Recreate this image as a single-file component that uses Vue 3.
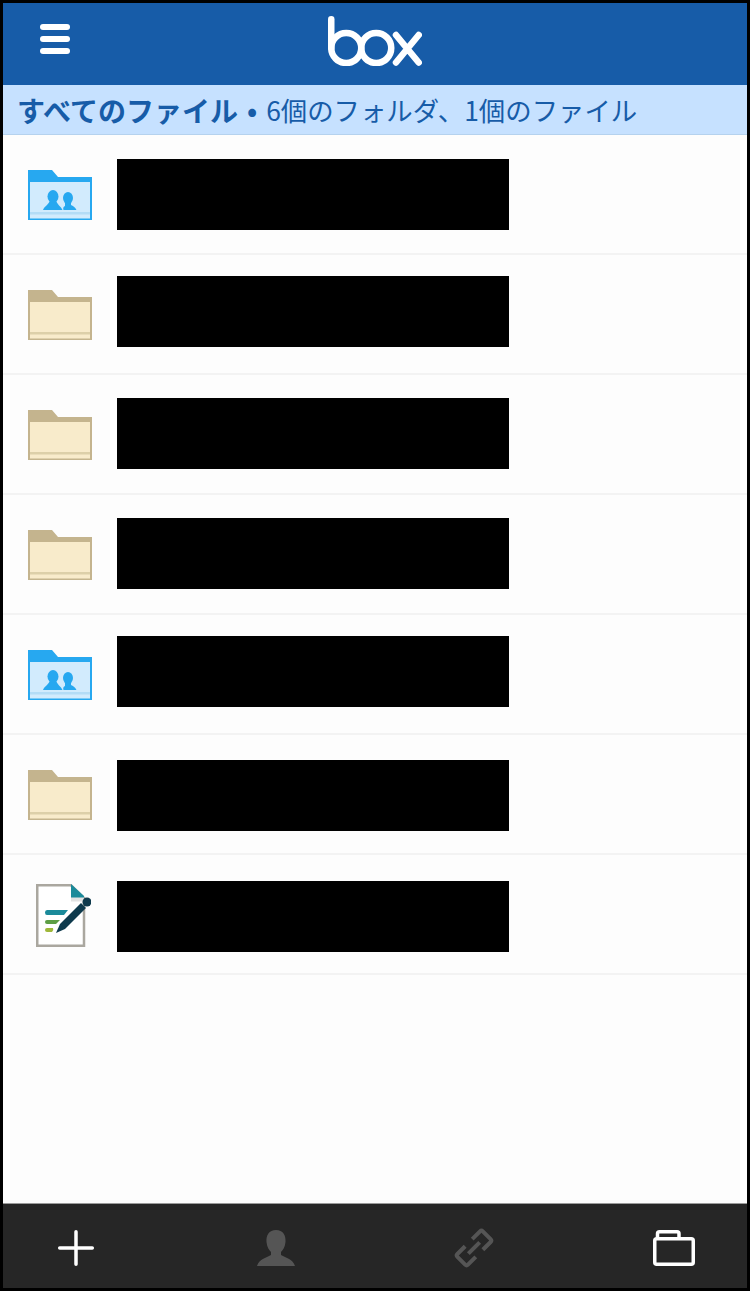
<template>
  <div class="phone">
    <header class="top-bar">
      <button class="menu-btn">
        <span class="menu-line"></span>
        <span class="menu-line"></span>
        <span class="menu-line"></span>
      </button>
      <svg class="logo" viewBox="0 0 94 50" width="94" height="50">
        <g fill="none" stroke="#fff" stroke-width="6.500" stroke-linecap="round">
          <path d="M3.250 3.250 V32" />
          <circle cx="18.250" cy="32" r="15" />
          <circle cx="48.250" cy="32" r="15" />
          <path d="M68 19 L90.700 46.500 M90.700 19 L68 46.500" />
        </g>
      </svg>
    </header>

    <div class="crumb">
      <strong class="crumb-title">すべてのファイル</strong>
      <span class="crumb-dot">•</span>
      <span class="crumb-info">6個のフォルダ、1個のファイル</span>
    </div>

    <main class="list">
      <div v-for="(row, i) in rows" :key="i" class="row">
        <div class="row-icon" :style="{ marginTop: row.iconTop + 'px' }">
          <svg v-if="row.type !== 'file'" viewBox="0 0 64 50" width="64" height="50">
            <path :fill="colors[row.type].edge" d="M0 0 H24 L30 7 H64 V50 H0 Z" />
            <rect x="2" y="12" width="60" height="36.500" :fill="colors[row.type].fill" />
            <rect x="2" y="42" width="60" height="2.500" :fill="colors[row.type].line" />
            <g v-if="row.type === 'shared'" :fill="colors.shared.edge">
              <ellipse cx="25" cy="26.500" rx="5.500" ry="6.500" />
              <path d="M15 40 C16 36 21 35 22 30 H28 C29 35 33 36 34.500 40 Z" />
              <ellipse cx="40" cy="28" rx="5" ry="6" />
              <path d="M35.500 40 C35 38 35 37 37 36 V32 H43 V35 C45 36 47 37 48.500 40 Z" />
            </g>
          </svg>
          <svg v-else class="doc-icon" viewBox="0 0 56 64" width="56" height="64">
            <path fill="#fff" stroke="#aaa79f" stroke-width="2.500" d="M2.250 2.250 H36 L49 15 V62.750 H2.250 Z" />
            <rect x="36" y="14" width="13" height="4.500" fill="#e3e3e3" />
            <path fill="#1b8a9a" d="M36 1 L49 13 V14.500 H36 Z" />
            <path fill="#1b8a9a" d="M12 27 H33 L29 32 H12 Q10 32 10 29.500 Q10 27 12 27 Z" />
            <path fill="#5d9e45" d="M12 37 H25 L21 41 H12 Q10 41 10 39 Q10 37 12 37 Z" />
            <path fill="#9fb83a" d="M12 45 H18 Q19 47 17 49 H12 Q10 49 10 47 Q10 45 12 45 Z" />
            <path fill="#0e3a4d" d="M21 50 L25 41 L46 20 L51 25 L30 46 Z" />
            <circle cx="52" cy="19" r="4.500" fill="#0e3a4d" />
          </svg>
        </div>
        <div class="redacted" :style="{ marginTop: row.nameTop + 'px' }"></div>
      </div>
    </main>

    <footer class="tab-bar">
      <svg class="tab" viewBox="0 0 36 36" width="36" height="36">
        <path d="M18 1.700 V34.300 M1.700 18 H34.300" stroke="#fff" stroke-width="3.500" stroke-linecap="round" />
      </svg>
      <svg class="tab tab-user" viewBox="0 0 36 36" width="36" height="36">
        <path fill="#555" d="M18 0 C25 0 28 5 27.500 12 C27 17 25 20 23 22 V25 C28 28 35 29 37 36 H-1 C1 29 8 28 13 25 V22 C11 20 9 17 8.500 12 C8 5 11 0 18 0 Z" />
      </svg>
      <svg class="tab tab-link" viewBox="0 0 36 36" width="36" height="36">
        <g transform="translate(18 18) rotate(-45)" fill="none" stroke="#555" stroke-width="4" stroke-linejoin="round">
          <path d="M-5 -7.500 H-16 Q-18 -7.500 -18 -5.500 V5.500 Q-18 7.500 -16 7.500 H-5" />
          <path d="M5 -7.500 H16 Q18 -7.500 18 -5.500 V5.500 Q18 7.500 16 7.500 H5" />
          <path d="M-8 0 H8" />
        </g>
      </svg>
      <svg class="tab tab-folder" viewBox="0 0 42 36" width="42" height="36">
        <g fill="none" stroke="#fff" stroke-width="3.500" stroke-linejoin="round">
          <rect x="1.750" y="8.750" width="38.500" height="25.500" rx="2" />
          <path d="M4.500 8.750 V3.750 Q4.500 1.750 6.500 1.750 H24 Q26 1.750 26 3.750 V8.750" />
        </g>
      </svg>
    </footer>
  </div>
</template>

<script setup>
const colors = {
  shared: { edge: '#27a8f0', fill: '#d2ebfd', line: '#b4dcf6' },
  plain: { edge: '#c4b48e', fill: '#f8ebcb', line: '#dccfa9' },
}

// the name boxes do not sit at the same height in every row
const rows = [
  { type: 'shared', iconTop: 35, nameTop: 24 },
  { type: 'plain', iconTop: 35, nameTop: 21 },
  { type: 'plain', iconTop: 35, nameTop: 23 },
  { type: 'plain', iconTop: 35, nameTop: 23 },
  { type: 'shared', iconTop: 35, nameTop: 21 },
  { type: 'plain', iconTop: 35, nameTop: 25 },
  { type: 'file', iconTop: 28, nameTop: 26 },
]
</script>

<style>
html,
body {
  margin: 0;
  background: #000;
}
</style>

<style scoped>
.phone {
  box-sizing: border-box;
  width: 750px;
  height: 1291px;
  border: 3px solid #000;
  display: flex;
  flex-direction: column;
  background: #fdfdfd;
  font-family: "Noto Sans CJK JP", "Liberation Sans", sans-serif;
}

.top-bar {
  height: 82px;
  flex: none;
  background: #175ca8;
  position: relative;
  display: flex;
  justify-content: center;
  padding-top: 13px;
  box-sizing: border-box;
}

.menu-btn {
  position: absolute;
  left: 37px;
  top: 21px;
  width: 30px;
  padding: 0;
  border: 0;
  background: none;
  display: flex;
  flex-direction: column;
  gap: 6px;
}

.menu-line {
  height: 6px;
  border-radius: 3px;
  background: #fff;
}

.logo {
  display: block;
}

.crumb {
  height: 50px;
  flex: none;
  box-sizing: border-box;
  background: #c6e1ff;
  border-bottom: 1px solid #b5d2ee;
  color: #175ca8;
  padding-left: 14px;
  display: flex;
  align-items: center;
  white-space: nowrap;
}

.crumb-title {
  font-size: 28px;
  font-weight: 700;
}

.crumb-dot {
  font-size: 27px;
  margin: 0 9px;
  font-weight: 700;
}

.crumb-info {
  font-size: 26.400px;
  font-weight: 400;
}

.list {
  flex: 1;
}

.row {
  height: 120px;
  box-sizing: border-box;
  border-bottom: 2px solid #f3f3f3;
  display: flex;
}

.row-icon {
  width: 64px;
  margin-left: 25px;
  flex: none;
}

.row-icon svg {
  display: block;
}

.doc-icon {
  margin-left: 7px;
}

.redacted {
  width: 392px;
  height: 71px;
  margin-left: 25px;
  background: #000;
}

.tab-bar {
  height: 85px;
  flex: none;
  box-sizing: border-box;
  background: #262626;
  border-top: 1px solid #9a9a9a;
  display: flex;
  align-items: center;
  padding: 3px 0 0 55px;
}

.tab {
  display: block;
  overflow: visible;
  flex: none;
}

.tab-user {
  margin-left: 164px;
}

.tab-link {
  margin-left: 162px;
}

.tab-folder {
  margin-left: 161px;
}
</style>
